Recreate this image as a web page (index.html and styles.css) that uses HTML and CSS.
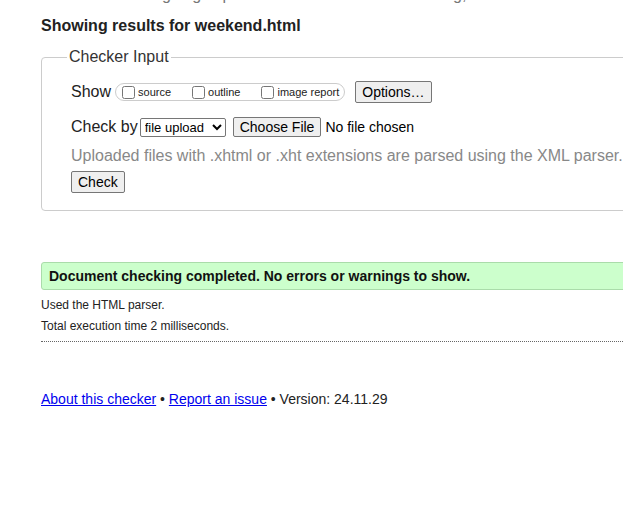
FILE: index.html
```html
<!DOCTYPE html>
<html lang="en">
<head>
<meta charset="utf-8">
<title>Nu Html Checker</title>
<link rel="stylesheet" href="styles.css">
</head>
<body>
<div class="page">
  <p class="intro">This tool is an ongoing experiment in better HTML checking, and its behavior remains subject to change</p>
  <h2 class="heading">Showing results for weekend.html</h2>
  <fieldset class="checker">
    <legend class="legend">Checker Input</legend>
    <div class="row row-show">
      <span class="row-label">Show</span>
      <span class="pill">
        <label class="opt"><input type="checkbox" class="cb">source</label>
        <label class="opt"><input type="checkbox" class="cb">outline</label>
        <label class="opt"><input type="checkbox" class="cb">image report</label>
      </span>
      <button class="btn btn-options" type="button">Options…</button>
    </div>
    <div class="row row-check">
      <span class="row-label">Check by</span>
      <select class="sel"><option>file upload</option></select>
      <span class="file">
        <button class="btn btn-file" type="button">Choose File</button>
        <span class="file-none">No file chosen</span>
      </span>
    </div>
    <p class="hint">Uploaded files with .xhtml or .xht extensions are parsed using the XML parser.</p>
    <div class="row row-submit">
      <button class="btn btn-check" type="button">Check</button>
    </div>
  </fieldset>

  <p class="success">Document checking completed. No errors or warnings to show.</p>
  <p class="note">Used the HTML parser.</p>
  <p class="note">Total execution time 2 milliseconds.</p>
  <hr class="sep">

  <p class="footer"><a href="#">About this checker</a> • <a href="#">Report an issue</a> • Version: 24.11.29</p>
</div>
</body>
</html>
```

FILE: styles.css
```css
html {
  overflow: hidden;
}
body {
  margin: 0;
  font-family: "Liberation Sans", Arial, sans-serif;
  color: #222;
  background: #fff;
}
.page {
  width: 720px;
  padding-left: 41px;
  margin-top: -15px;
}
.intro {
  margin: 0;
  font-size: 16px;
  line-height: 20px;
  color: #777;
  white-space: nowrap;
}
.heading {
  margin: 11px 0 0;
  font-size: 16px;
  line-height: 20px;
  font-weight: bold;
  color: #222;
}
.checker {
  margin: 12px 0 0;
  padding: 15px 0 17px 29px;
  border: 1px solid #ccc;
  border-radius: 4px;
  min-width: 0;
}
.legend {
  margin-left: -4px;
  padding: 0 2px;
  font-size: 16px;
  line-height: 18px;
  color: #333;
}
.row {
  display: flex;
  align-items: center;
}
.row-label {
  font-size: 16px;
  color: #222;
  margin-right: 4px;
}
.row-show {
  height: 22px;
}
.pill {
  display: inline-flex;
  align-items: center;
  height: 18px;
  box-sizing: border-box;
  border: 1px solid #ccc;
  border-radius: 9px;
  padding: 0 5px 0 5px;
  margin-right: 10px;
}
.opt {
  display: inline-flex;
  align-items: center;
  font-size: 11px;
  color: #222;
  margin-right: 20px;
}
.opt:last-child {
  margin-right: 0;
}
.cb {
  margin: 0 3px 0 1px;
  width: 13px;
  height: 13px;
}
.btn {
  font-family: "Liberation Sans", Arial, sans-serif;
  color: #000;
  background: #efefef;
  border: 1px solid #767676;
  border-radius: 2px;
  padding: 1px 6px;
}
.btn-options {
  font-size: 14px;
  height: 22px;
  padding: 0 6px;
}
.row-check {
  margin-top: 13px;
  height: 22px;
}
.row-check .row-label {
  margin-right: 2px;
}
.sel {
  font-family: "Liberation Sans", Arial, sans-serif;
  font-size: 13px;
  height: 19px;
  width: 86px;
  border: 1px solid #767676;
  border-radius: 2px;
  padding: 0;
  margin-right: 7px;
  color: #000;
  background: #fff;
}
.file {
  display: inline-flex;
  align-items: center;
}
.btn-file {
  font-size: 14px;
  height: 20px;
  padding: 0 6px;
  margin-right: 4px;
}
.file-none {
  font-size: 14px;
  color: #000;
}
.hint {
  margin: 8px 0 0;
  font-size: 16px;
  line-height: 20px;
  color: #888;
  white-space: nowrap;
}
.row-submit {
  margin-top: 5px;
}
.btn-check {
  font-size: 14px;
  height: 22px;
  padding: 0 6px;
}
.success {
  margin: 51px 0 0;
  height: 28px;
  box-sizing: border-box;
  display: flex;
  align-items: center;
  padding-left: 7px;
  background: #ccffcc;
  border: 1px solid #aadcaa;
  border-radius: 3px;
  font-size: 14px;
  font-weight: bold;
  color: #111;
}
.note {
  margin: 7px 0 0;
  font-size: 12px;
  line-height: 16px;
  color: #222;
}
.note + .note {
  margin-top: 5px;
}
.sep {
  margin: 7px 0 0;
  border: 0;
  border-top: 1px dotted #666;
  height: 0;
}
.footer {
  margin: 48px 0 0;
  font-size: 14px;
  line-height: 18px;
  color: #222;
}
.footer a {
  color: #0000ee;
}
```
